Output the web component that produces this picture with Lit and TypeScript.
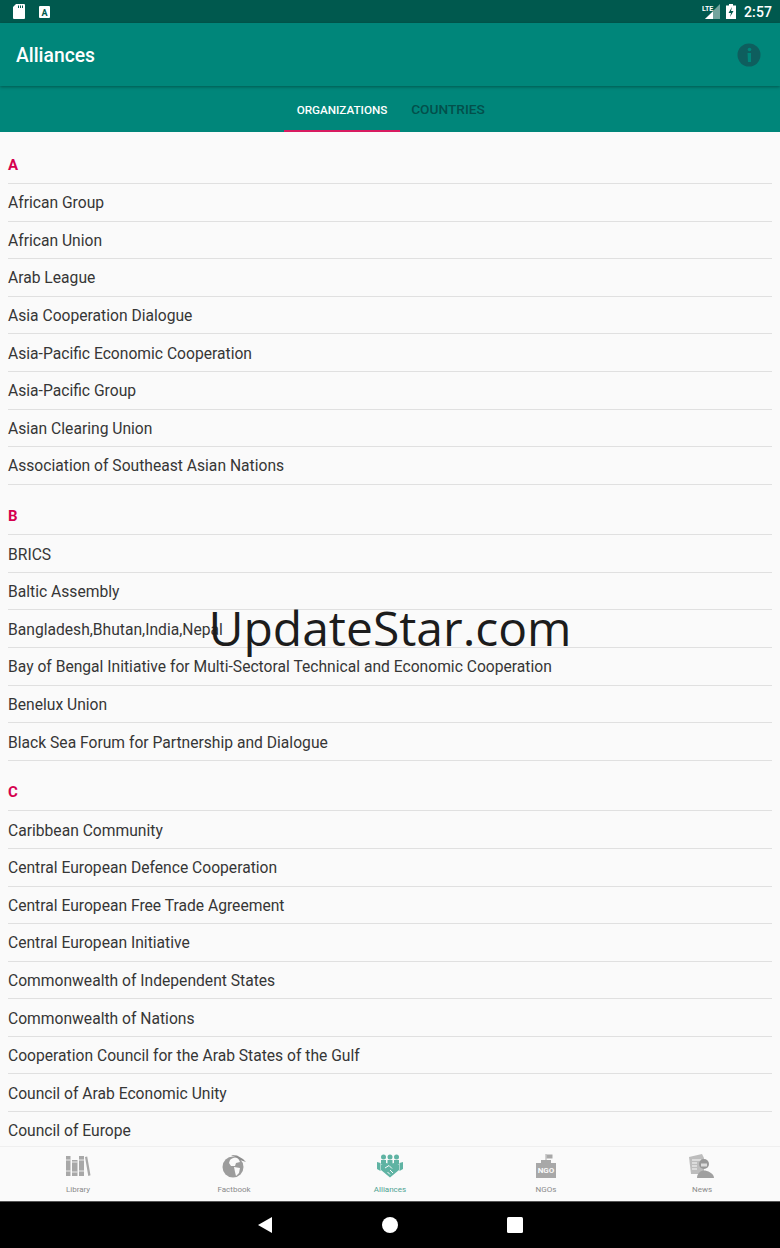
import { LitElement, html, css, svg } from "lit";
import { customElement } from "lit/decorators.js";

const sections: { h: string; items: string[] }[] = [
  { h: "A", items: ["African Group", "African Union", "Arab League", "Asia Cooperation Dialogue", "Asia-Pacific Economic Cooperation", "Asia-Pacific Group", "Asian Clearing Union", "Association of Southeast Asian Nations"] },
  { h: "B", items: ["BRICS", "Baltic Assembly", "Bangladesh,Bhutan,India,Nepal", "Bay of Bengal Initiative for Multi-Sectoral Technical and Economic Cooperation", "Benelux Union", "Black Sea Forum for Partnership and Dialogue"] },
  { h: "C", items: ["Caribbean Community", "Central European Defence Cooperation", "Central European Free Trade Agreement", "Central European Initiative", "Commonwealth of Independent States", "Commonwealth of Nations", "Cooperation Council for the Arab States of the Gulf", "Council of Arab Economic Unity", "Council of Europe"] },
];

const icons = {
  library: svg`<svg width="26" height="24" viewBox="0 0 26 24" fill="#a8a8a8"><path d="M1 2h4.500v20H1zM7 6h5.500v16H7zM14 2h5v20h-5zM20 3l2.200-.5 3.300 18.800-2.200.7z"/><path d="M1 6h4.500M1 17h4.500M7 8h5.500M7 18h5.500M14 6h5M14 17h5" stroke="#fafafa" stroke-width=".8"/></svg>`,
  globe: svg`<svg width="24" height="24" viewBox="0 0 24 24"><circle cx="11" cy="13" r="10.500" fill="#9c9c9c"/><path d="M8 6c2-2 5-3 8-2l2 4-4 1-1 3-4 0-2-3zM12 13l6 1-1 5-3 3-1-4z" fill="#fafafa"/><path d="M9 1l6 .5 6 3.500 3 3-6-2-3-2z" fill="#8e8e8e"/></svg>`,
  alliances: svg`<svg width="26" height="24" viewBox="0 0 26 24" fill="#5fb3a3"><circle cx="6.500" cy="3" r="2.500"/><circle cx="13" cy="3" r="2.500"/><circle cx="19.500" cy="3" r="2.500"/><path d="M4 6h5v4H4zM10.500 6h5v4h-5zM17 6h5v4h-5z"/><path d="M0 8l3.500 1v8L0 15zM26 8l-3.500 1v8l3.500-2z"/><path d="M4 10.500l5-1.500 4 1 4-1 5 1.500v5.500l-9 7.500-9-7.500z"/><path d="M8 14l4-2.500 3 3M10.500 18l2.500 2.500M13 16l3 3" stroke="#fafafa" stroke-width="1" fill="none"/></svg>`,
  ngo: svg`<svg width="20" height="24" viewBox="0 0 20 24"><path d="M9.500 0h1v7h-1z" fill="#a8a8a8"/><path d="M10.500 .500h6v4h-6z" fill="#a8a8a8"/><path d="M5 6h10v3h5v15H0V9h5z" fill="#a8a8a8"/><text x="10" y="18.500" text-anchor="middle" font-family="Roboto" font-weight="700" font-size="8" fill="#fafafa">NGO</text></svg>`,
  news: svg`<svg width="26" height="24" viewBox="0 0 26 24"><path d="M0 3l13-3 2 4v16H2z" fill="#bdbdbd"/><path d="M3 6h9M3 9h5M3 12h5M3 15h5" stroke="#fafafa" stroke-width="1"/><circle cx="15" cy="10" r="5" fill="#989898"/><path d="M12 9.500h6v3h-6z" fill="#dcdcdc"/><path d="M8 24c0-5 4-7.500 7-7.500s10 2.500 10 7.500z" fill="#a0a0a0"/></svg>`,
};

@customElement("app-root")
export class AppRoot extends LitElement {
  static styles = css`
    :host { display: block; width: 780px; height: 1248px; position: relative; overflow: hidden; font-family: Roboto, sans-serif; background: #fafafa; }
    .page { display: flex; flex-direction: column; height: 1248px; }
    .status { height: 23px; flex: none; background: #00594e; display: flex; align-items: center; padding: 0 8px 0 13px; color: #fff; }
    .status .left { display: flex; gap: 14px; align-items: center; flex: 1; }
    .status .right { display: flex; align-items: center; gap: 6px; }
    .clock { font-size: 14px; font-weight: 500; letter-spacing: 0.1px; margin-left: 2px; }
    .toolbar { height: 63px; flex: none; background: #00867a; display: flex; align-items: center; justify-content: space-between; padding: 0 19px 0 16px; box-shadow: 0 1px 3px rgba(0,0,0,.35); position: relative; z-index: 1; }
    .title { color: #fff; font-size: 19.300px; font-weight: 500; padding-top: 1px; }
    .tabs { height: 46px; flex: none; background: #00867a; display: flex; justify-content: center; }
    .tab { display: flex; align-items: center; justify-content: center; font-weight: 500; box-sizing: border-box; }
    .tab.on { width: 116px; font-size: 11.700px; color: #fff; padding-top: 3px; border-bottom: 2px solid #d81b60; }
    .tab.off { width: 96px; font-size: 13.700px; color: #034f4b; }
    .list { flex: 1; min-height: 0; overflow: hidden; padding: 0 8px; }
    .section { padding-top: 13.500px; }
    .section:first-child { padding-top: 15px; }
    .head { height: 37px; display: flex; align-items: center; box-sizing: border-box; font-size: 15px; font-weight: 700; color: #d5004f; border-bottom: 1px solid #e0e0e0; }
    .row { height: 37.600px; box-sizing: border-box; display: flex; align-items: center; padding-top: 1px; font-size: 15.650px; color: #363636; border-bottom: 1px solid #e0e0e0; white-space: nowrap; }
    .bottom { height: 55px; flex: none; border-top: 1px solid #efefef; box-sizing: border-box; background: #fafafa; display: grid; grid-template-columns: repeat(5, 1fr); }
    .nav { display: flex; flex-direction: column; align-items: center; padding-top: 7px; font-size: 8px; color: #8a8a8a; gap: 7px; line-height: 9px; }
    .nav svg { display: block; }
    .nav.on { color: #4fa392; }
    .sys { height: 47px; flex: none; background: #000; display: flex; align-items: center; justify-content: center; gap: 109px; border-top: 1px solid #555; box-sizing: border-box; }
    .mark { position: absolute; left: 0; right: 0; top: 594px; text-align: center; font-family: "Open Sans", sans-serif; font-size: 48px; line-height: 68px; color: #1c1c1c; pointer-events: none; }
  `;

  render() {
    return html`<div class="page">
      <div class="status">
        <div class="left">
          <svg width="12" height="15" viewBox="0 0 12 15"><path d="M3 0h8a1 1 0 0 1 1 1v13a1 1 0 0 1-1 1H1a1 1 0 0 1-1-1V3z" fill="#fff"/><path d="M5 1.500h1v2.500H5zM7 1.500h1v2.500H7zM9 1.500h1v2.500H9z" fill="#00594e"/></svg>
          <svg width="11" height="12" viewBox="0 0 11 12"><rect width="11" height="12" rx="1" fill="#fff"/><text x="5.500" y="9.500" text-anchor="middle" font-family="Roboto" font-weight="700" font-size="9" fill="#00594e">A</text></svg>
        </div>
        <div class="right">
          <svg width="18" height="15" viewBox="0 0 18 15"><path d="M18 0v15H3z" fill="#fff" fill-opacity=".45"/><path d="M11 7.500V15H3z" fill="#fff"/><text x="0" y="7" font-family="Roboto" font-weight="700" font-size="7" fill="#fff">LTE</text></svg>
          <svg width="10" height="15" viewBox="0 0 10 15"><path d="M3 0h4v1.500h3V15H0V1.500h3z" fill="#fff"/><path d="M6 3L2.500 9H5l-1 4 3.500-6H5z" fill="#00594e"/></svg>
          <span class="clock">2:57</span>
        </div>
      </div>
      <div class="toolbar">
        <span class="title">Alliances</span>
        <svg width="24" height="24" viewBox="0 0 24 24"><circle cx="12" cy="12" r="11.500" fill="#0e5e5e"/><circle cx="12.500" cy="6.500" r="1.800" fill="#00867a"/><path d="M10.500 10h3.500v9h-3z" fill="#00867a"/></svg>
      </div>
      <div class="tabs">
        <div class="tab on">ORGANIZATIONS</div>
        <div class="tab off">COUNTRIES</div>
      </div>
      <div class="list">
        ${sections.map(s => html`<div class="section">
          <div class="head">${s.h}</div>
          ${s.items.map(i => html`<div class="row">${i}</div>`)}
        </div>`)}
      </div>
      <div class="bottom">
        <div class="nav">${icons.library}<span>Library</span></div>
        <div class="nav">${icons.globe}<span>Factbook</span></div>
        <div class="nav on">${icons.alliances}<span>Alliances</span></div>
        <div class="nav">${icons.ngo}<span>NGOs</span></div>
        <div class="nav">${icons.news}<span>News</span></div>
      </div>
      <div class="sys">
        <svg width="16" height="16" viewBox="0 0 16 16"><path d="M15 0v16L1 8z" fill="#fff"/></svg>
        <svg width="16" height="16" viewBox="0 0 16 16"><circle cx="8" cy="8" r="8" fill="#fff"/></svg>
        <svg width="16" height="16" viewBox="0 0 16 16"><rect width="16" height="16" rx="1.500" fill="#fff"/></svg>
      </div>
    </div>
    <div class="mark">UpdateStar.com</div>`;
  }
}
